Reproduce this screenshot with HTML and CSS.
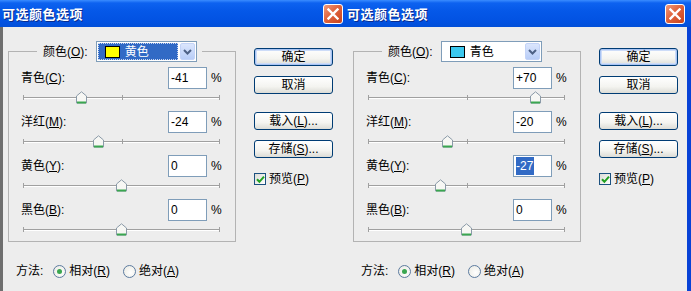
FILE: index.html
```html
<!DOCTYPE html>
<html>
<head>
<meta charset="utf-8">
<link rel="stylesheet" href="styles.css">
</head>
<body>
<div class="screen">
  <section class="dlg dlg-left">
    <header class="title">
      <span class="title-text">可选颜色选项</span>
      <span class="close"><svg width="12" height="12" viewBox="0 0 12 12"><path d="M1.5 1.5 L10.5 10.5 M10.5 1.5 L1.5 10.5" stroke="#fff" stroke-width="2.4" stroke-linecap="square"/></svg></span>
    </header>
    <div class="body body-left">
      <div class="main">
        <fieldset class="group">
          <legend class="legend">
            <span class="legend-in">
              <span class="lbl">颜色(<u>O</u>):</span>
              <span class="combo">
                <span class="combo-face selected"><span class="swatch yellow"></span><span class="ctext">黄色</span></span>
                <span class="arrow"><svg width="9" height="6" viewBox="0 0 9 6"><path d="M1 1 L4.5 4.5 L8 1" stroke="#4d6185" stroke-width="2" fill="none"/></svg></span>
              </span>
            </span>
          </legend>
          <div class="row"><span class="lbl">青色(<u>C</u>):</span><span class="num">-41</span><span class="pct">%</span></div>
          <div class="slider"><div class="track"></div><i class="tick t0"></i><i class="tick t50"></i><i class="tick t100"></i><svg class="thumb" style="left:53px" width="11" height="13" viewBox="0 0 11 13"><path d="M0.5 12 V5 L5.5 0.8 L10.5 5 V12 Z" fill="#f7f7f4" stroke="#8a9aa8"/><path d="M1 11.5 H10" stroke="#3aa650" stroke-width="2"/></svg></div>
          <div class="row"><span class="lbl">洋红(<u>M</u>):</span><span class="num">-24</span><span class="pct">%</span></div>
          <div class="slider"><div class="track"></div><i class="tick t0"></i><i class="tick t50"></i><i class="tick t100"></i><svg class="thumb" style="left:70px" width="11" height="13" viewBox="0 0 11 13"><path d="M0.5 12 V5 L5.5 0.8 L10.5 5 V12 Z" fill="#f7f7f4" stroke="#8a9aa8"/><path d="M1 11.5 H10" stroke="#3aa650" stroke-width="2"/></svg></div>
          <div class="row"><span class="lbl">黄色(<u>Y</u>):</span><span class="num">0</span><span class="pct">%</span></div>
          <div class="slider"><div class="track"></div><i class="tick t0"></i><i class="tick t50"></i><i class="tick t100"></i><svg class="thumb" style="left:93px" width="11" height="13" viewBox="0 0 11 13"><path d="M0.5 12 V5 L5.5 0.8 L10.5 5 V12 Z" fill="#f7f7f4" stroke="#8a9aa8"/><path d="M1 11.5 H10" stroke="#3aa650" stroke-width="2"/></svg></div>
          <div class="row"><span class="lbl">黑色(<u>B</u>):</span><span class="num">0</span><span class="pct">%</span></div>
          <div class="slider last"><div class="track"></div><i class="tick t0"></i><i class="tick t50"></i><i class="tick t100"></i><svg class="thumb" style="left:93px" width="11" height="13" viewBox="0 0 11 13"><path d="M0.5 12 V5 L5.5 0.8 L10.5 5 V12 Z" fill="#f7f7f4" stroke="#8a9aa8"/><path d="M1 11.5 H10" stroke="#3aa650" stroke-width="2"/></svg></div>
        </fieldset>
        <div class="method">
          <span class="mlabel">方法:</span>
          <span class="radio on"><i></i></span><span class="rlabel">相对(<u>R</u>)</span>
          <span class="radio"><i></i></span><span class="rlabel">绝对(<u>A</u>)</span>
        </div>
      </div>
      <div class="side">
        <span class="btn default">确定</span>
        <span class="btn">取消</span>
        <span class="btn gap">载入(<u>L</u>)...</span>
        <span class="btn">存储(<u>S</u>)...</span>
        <span class="check"><span class="box"><svg width="9" height="9" viewBox="0 0 9 9"><path d="M1 4.2 L3.4 6.8 L8 1.6" stroke="#21a121" stroke-width="2" fill="none"/></svg></span><span>预览(<u>P</u>)</span></span>
      </div>
    </div>
  </section>

  <section class="dlg dlg-right">
    <header class="title">
      <span class="title-text">可选颜色选项</span>
      <span class="close"><svg width="12" height="12" viewBox="0 0 12 12"><path d="M1.5 1.5 L10.5 10.5 M10.5 1.5 L1.5 10.5" stroke="#fff" stroke-width="2.4" stroke-linecap="square"/></svg></span>
    </header>
    <div class="body body-right">
      <div class="main">
        <fieldset class="group">
          <legend class="legend">
            <span class="legend-in">
              <span class="lbl">颜色(<u>O</u>):</span>
              <span class="combo">
                <span class="combo-face"><span class="swatch cyan"></span><span class="ctext">青色</span></span>
                <span class="arrow"><svg width="9" height="6" viewBox="0 0 9 6"><path d="M1 1 L4.5 4.5 L8 1" stroke="#4d6185" stroke-width="2" fill="none"/></svg></span>
              </span>
            </span>
          </legend>
          <div class="row"><span class="lbl">青色(<u>C</u>):</span><span class="num">+70</span><span class="pct">%</span></div>
          <div class="slider"><div class="track"></div><i class="tick t0"></i><i class="tick t50"></i><i class="tick t100"></i><svg class="thumb" style="left:162px" width="11" height="13" viewBox="0 0 11 13"><path d="M0.5 12 V5 L5.5 0.8 L10.5 5 V12 Z" fill="#f7f7f4" stroke="#8a9aa8"/><path d="M1 11.5 H10" stroke="#3aa650" stroke-width="2"/></svg></div>
          <div class="row"><span class="lbl">洋红(<u>M</u>):</span><span class="num">-20</span><span class="pct">%</span></div>
          <div class="slider"><div class="track"></div><i class="tick t0"></i><i class="tick t50"></i><i class="tick t100"></i><svg class="thumb" style="left:74px" width="11" height="13" viewBox="0 0 11 13"><path d="M0.5 12 V5 L5.5 0.8 L10.5 5 V12 Z" fill="#f7f7f4" stroke="#8a9aa8"/><path d="M1 11.5 H10" stroke="#3aa650" stroke-width="2"/></svg></div>
          <div class="row"><span class="lbl">黄色(<u>Y</u>):</span><span class="num"><span class="hl">-27</span></span><span class="pct">%</span></div>
          <div class="slider"><div class="track"></div><i class="tick t0"></i><i class="tick t50"></i><i class="tick t100"></i><svg class="thumb" style="left:67px" width="11" height="13" viewBox="0 0 11 13"><path d="M0.5 12 V5 L5.5 0.8 L10.5 5 V12 Z" fill="#f7f7f4" stroke="#8a9aa8"/><path d="M1 11.5 H10" stroke="#3aa650" stroke-width="2"/></svg></div>
          <div class="row"><span class="lbl">黑色(<u>B</u>):</span><span class="num">0</span><span class="pct">%</span></div>
          <div class="slider last"><div class="track"></div><i class="tick t0"></i><i class="tick t50"></i><i class="tick t100"></i><svg class="thumb" style="left:93px" width="11" height="13" viewBox="0 0 11 13"><path d="M0.5 12 V5 L5.5 0.8 L10.5 5 V12 Z" fill="#f7f7f4" stroke="#8a9aa8"/><path d="M1 11.5 H10" stroke="#3aa650" stroke-width="2"/></svg></div>
        </fieldset>
        <div class="method">
          <span class="mlabel">方法:</span>
          <span class="radio on"><i></i></span><span class="rlabel">相对(<u>R</u>)</span>
          <span class="radio"><i></i></span><span class="rlabel">绝对(<u>A</u>)</span>
        </div>
      </div>
      <div class="side">
        <span class="btn default">确定</span>
        <span class="btn">取消</span>
        <span class="btn gap">载入(<u>L</u>)...</span>
        <span class="btn">存储(<u>S</u>)...</span>
        <span class="check"><span class="box"><svg width="9" height="9" viewBox="0 0 9 9"><path d="M1 4.2 L3.4 6.8 L8 1.6" stroke="#21a121" stroke-width="2" fill="none"/></svg></span><span>预览(<u>P</u>)</span></span>
      </div>
    </div>
  </section>
</div>
</body>
</html>
```
FILE: styles.css
```css
* { box-sizing: border-box; }
html, body { margin: 0; padding: 0; }
body {
  background: #ededed;
  font: 12px/1 "Liberation Sans", "Noto Sans CJK SC", sans-serif;
  color: #000;
}
u { text-decoration: underline; text-underline-offset: 1px; }

.screen { display: flex; width: 691px; height: 291px; overflow: hidden; }
.dlg { display: flex; flex-direction: column; background: #ededed; height: 291px; }
.dlg-left { width: 345px; }
.dlg-right { width: 346px; }

.title {
  height: 27px;
  flex: none;
  display: flex;
  align-items: center;
  justify-content: space-between;
  padding-left: 2px;
  background: linear-gradient(to bottom, #3a8cff 0, #0d62f0 3px, #0558e8 40%, #0252e2 80%, #024fd8 100%);
  color: #fff;
}
.title-text {
  font: bold 13px/1 "Noto Sans CJK SC", sans-serif;
  letter-spacing: 0.5px;
  text-shadow: 1px 1px 0 #0a2c8c;
}
.close {
  width: 20px; height: 20px;
  margin-right: 2px;
  border: 1px solid #fff;
  border-radius: 3px;
  background: linear-gradient(135deg, #f09a7c 0%, #e0643e 45%, #c8431c 100%);
  display: flex; align-items: center; justify-content: center;
}
.dlg-right .close { margin-right: 6px; }

.body {
  flex: 1;
  display: grid;
  grid-template-columns: 228px 79px;
  column-gap: 18px;
  align-items: start;
  padding: 14px 0 0 8px;
}
.body-left { border-left: 3px solid #6e6e6e; padding-left: 5px; }
.body-right { border-right: 4px solid #0842d6; }

.group {
  margin: 0;
  min-width: 0;
  border: 1px solid #b3b3b3;
  padding: 7px 14px 0 12px;
}
.legend {
  margin-left: 16px;
  padding: 0 5px;
  margin-bottom: -2px;
}
.legend-in { display: flex; align-items: center; gap: 8px; height: 21px; }
.legend-in .lbl { padding-left: 1px; }

.combo {
  width: 101px; height: 21px;
  border: 1px solid #7f9db9;
  background: #fff;
  display: flex; align-items: center;
  padding: 1px;
}
.combo-face {
  flex: 1; height: 17px;
  display: flex; align-items: center;
  padding-left: 7px;
  gap: 5px;
  margin-right: 2px;
}
.combo-face.selected {
  background: #316ac5;
  color: #fff;
  outline: 1px dotted #c9d6ef;
  outline-offset: -1px;
}
.swatch { width: 15px; height: 12px; border: 1px solid #000; }
.yellow { background: #ffff00; }
.cyan { background: #3cc8ee; }
.ctext { font-size: 12px; }
.arrow {
  width: 15px; height: 17px;
  border-radius: 2px;
  background: linear-gradient(to bottom, #dbe6fd, #b8cdf7);
  border: 1px solid #c3d3f7;
  display: flex; align-items: center; justify-content: center;
}

.row { display: flex; align-items: center; height: 22px; }
.row .lbl { flex: 1; }
.num {
  width: 39px; height: 22px;
  border: 1px solid #7f9db9;
  background: #fff;
  display: flex; align-items: center;
  padding-left: 2px;
}
.hl { background: #316ac5; color: #fff; padding: 3px 1px 3px 0; }
.pct { width: 10px; margin-left: 4px; }

.slider { position: relative; height: 22px; margin: 0 1px 0 2px; padding-top: 8px; }
.slider.last { height: 20px; }
.track {
  height: 2px;
  border-top: 1px solid #a0a0a0;
  border-bottom: 1px solid #ffffff;
}
.tick { position: absolute; top: 6px; width: 1px; height: 5px; background: #a0a0a0; }
.t0 { left: 0; }
.t50 { left: 99px; }
.t100 { right: 0; }
.thumb { position: absolute; top: 2px; }

.method {
  display: flex; align-items: center;
  height: 18px;
  margin-top: 20px;
  padding-left: 8px;
}
.mlabel { margin-right: 10px; }
.radio {
  width: 13px; height: 13px;
  border-radius: 50%;
  border: 1px solid #5c7ba0;
  background: radial-gradient(circle at 60% 60%, #ffffff 0, #e8e8e0 100%);
  display: flex; align-items: center; justify-content: center;
  margin-right: 3px;
}
.radio.on i { width: 5px; height: 5px; border-radius: 50%; background: #3aa650; }
.rlabel { margin-right: 13px; }

.side { display: flex; flex-direction: column; align-items: flex-start; margin-top: 7px; }
.btn {
  width: 79px; height: 18px;
  border: 1px solid #003c74;
  border-radius: 3px;
  background: linear-gradient(to bottom, #ffffff 0, #f4f4f0 60%, #dcdcd6 100%);
  display: flex; align-items: center; justify-content: center;
  margin-bottom: 10px;
}
.btn.default { box-shadow: inset 0 0 0 1px #a9c4f3, inset 0 0 0 2px #cddcf8; }
.btn.gap { margin-top: 8px; }
.check { display: flex; align-items: center; gap: 3px; margin-top: 5px; }
.box {
  width: 12px; height: 12px;
  border: 1px solid #1c5180;
  background: linear-gradient(135deg, #dcdcd6, #ffffff);
  display: flex; align-items: center; justify-content: center;
}
```
